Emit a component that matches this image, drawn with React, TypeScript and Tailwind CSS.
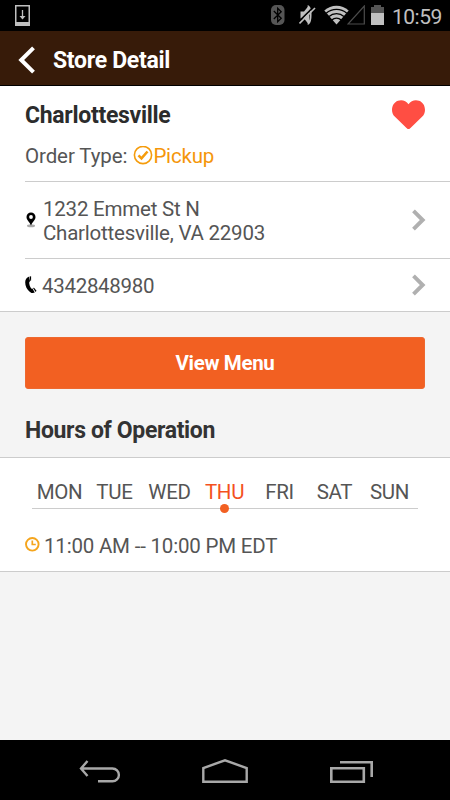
import type { ReactNode } from 'react';

const days = [
  { label: 'MON' },
  { label: 'TUE' },
  { label: 'WED' },
  { label: 'THU', active: true },
  { label: 'FRI' },
  { label: 'SAT' },
  { label: 'SUN' },
];

function StatusBar() {
  return (
    <div className="flex h-[31px] shrink-0 items-start bg-black text-[#c0c0c0]">
      <svg className="mt-[5px] ml-[15px]" width="15" height="21" viewBox="0 0 15 21">
        <path d="M0 0h15v21H0z" fill="#c0c0c0" />
        <path d="M1.500 1.500h12v15.500h-12z" fill="#000" />
        <path d="M7.500 5v8" stroke="#c0c0c0" strokeWidth="1.300" />
        <path d="M4.500 11h6L7.500 14.500z" fill="#c0c0c0" />
      </svg>

      <svg className="mt-[5px] ml-[241px]" width="14" height="20" viewBox="0 0 14 20">
        <rect x="0" y="0" width="13.500" height="20" rx="5" fill="#555" />
        <path d="M2.800 6l7.400 7.200L6.700 16.700V3.300l3.500 3.500L2.800 14" fill="none" stroke="#000" strokeWidth="1.300" />
      </svg>

      <svg className="mt-[5px] ml-[14px]" width="18" height="20" viewBox="0 0 18 20">
        <path d="M1.500 6.500H5L9.500 1v18L5 13.500H1.500z" fill="#c0c0c0" />
        <path d="M9.500 1.500c3 2 3 15 0 17z" fill="none" stroke="#c0c0c0" strokeWidth="1.600" />
        <path d="M-.5 17L15 1.500" stroke="#000" strokeWidth="1.600" />
        <path d="M.5 18.500L16 3" stroke="#c0c0c0" strokeWidth="1.600" />
      </svg>

      <svg className="mt-[5px] ml-[7px]" width="25" height="20" viewBox="0 0 25 20">
        <path d="M12.500 19.500L.3 5.500C7-.8 18-.8 24.700 5.500z" fill="#c0c0c0" />
        <path d="M2.200 8.200c5.800-5.200 14.800-5.200 20.600 0M5 11.500c4.200-3.800 10.800-3.800 15 0M7.800 15c2.700-2.500 6.700-2.500 9.400 0" fill="none" stroke="#000" strokeWidth="1.300" />
      </svg>

      <svg className="mt-[5px] -ml-[2px]" width="18" height="20" viewBox="0 0 18 20">
        <path d="M17.300 1v18H1z" fill="none" stroke="#4c4c4c" strokeWidth="1.200" />
      </svg>

      <svg className="mt-[5px] ml-[6px]" width="13" height="20" viewBox="0 0 13 20">
        <path d="M0 2h3V0h7v2h3v6H0z" fill="#555" />
        <path d="M0 8h13v12H0z" fill="#c0c0c0" />
      </svg>

      <span className="ml-[8px] pt-[5px] text-[21px] leading-[24px] tracking-[-0.5px] whitespace-nowrap">10:59</span>
    </div>
  );
}

function Header() {
  return (
    <header className="flex h-[55px] shrink-0 items-center border-b border-black bg-[#371b09] text-white">
      <svg className="mt-[4px] ml-[18px]" width="18" height="28" viewBox="0 0 18 28">
        <path d="M15.500 1.800L3.200 14l12.300 12.200" fill="none" stroke="currentColor" strokeWidth="4" />
      </svg>
      <h1 className="mt-[5px] ml-[17px] text-[23px] leading-[28px] font-bold tracking-[-0.3px]">Store Detail</h1>
    </header>
  );
}

function Chevron() {
  return (
    <svg className="ml-auto shrink-0" width="14" height="22" viewBox="0 0 14 22">
      <path d="M1.500 1.800l9.200 9.200-9.200 9.200" fill="none" stroke="#b0b0b0" strokeWidth="3.900" />
    </svg>
  );
}

function Row({ className, children }: { className: string; children: ReactNode }) {
  return (
    <div className={`ml-[25px] flex items-center border-t border-[#ccc] pr-[24px] ${className}`}>
      {children}
    </div>
  );
}

function StoreCard() {
  return (
    <section className="h-[226px] border-b border-[#ccc] bg-white">
      <div className="flex h-[95px] justify-between pr-[25px] pl-[25px]">
        <div>
          <h2 className="mt-[16px] text-[23px] leading-[28px] font-bold tracking-[-0.3px] text-[#2c2c2c]">
            Charlottesville
          </h2>
          <div className="mt-[13px] flex items-center text-[20.500px] leading-[26px] tracking-[-0.1px]">
            <span>Order Type:</span>
            <svg className="ml-[6px]" width="20" height="20" viewBox="0 0 20 20">
              <circle cx="10" cy="9" r="8.600" fill="none" stroke="#f59c0c" strokeWidth="1.600" />
              <path d="M5.500 9.300l3 3L14.500 5.500" fill="none" stroke="#f59c0c" strokeWidth="2.600" />
            </svg>
            <span className="tracking-[-0.2px] text-[#f5960a]">Pickup</span>
          </div>
        </div>
        <svg className="mt-[14px]" width="34" height="30" viewBox="0 0 34 30">
          <path d="M17.500 29c-1 0-1.500-.5-2-1L3.700 16.500C-1 12 .7 3 7 .8c4-1.400 8 0 10.500 3.400C20 .8 24-.6 28 .8c6.300 2.200 8 11.200 3.300 15.700L19.500 28c-.5.500-1 1-2 1z" fill="#ff4e43" />
        </svg>
      </div>

      <Row className="h-[77px]">
        <svg className="shrink-0" width="12" height="16" viewBox="0 0 12 16">
          <ellipse cx="6" cy="13.800" rx="4" ry="1.500" fill="#aaa" />
          <path d="M6 13.500C5 10.500 1.500 8.300 1.500 5a4.500 4.500 0 019 0c0 3.300-3.500 5.500-4.500 8.500z" fill="#000" />
          <circle cx="6" cy="5" r="1.900" fill="#fff" />
        </svg>
        <p className="mt-[2px] ml-[6px] text-[20.500px] leading-[24px] tracking-[-0.22px] whitespace-nowrap">
          1232 Emmet St N
          <br />
          Charlottesville, VA 22903
        </p>
        <Chevron />
      </Row>

      <Row className="h-[52px]">
        <svg className="shrink-0" width="12" height="18" viewBox="0 0 12 18">
          <path d="M3.400.9L4.100.6l1 4.800-.8.400C3.900 8 5 11 6.500 12.700l.9-.3 2.400 4.200c-1.600.8-3.200.6-4.800-.7C2 13.700.1 10 .2 6.200.2 3.600 1.400 1.800 3.400.9z" fill="#000" />
          <path d="M4.700.4L6.100.2v4.300l-.8.500zM8 12l1-.3 2.500 3-.9 1.300z" fill="#000" />
        </svg>
        <span className="mt-[2px] ml-[5px] text-[20.500px] leading-[26px] tracking-[-0.3px]">4342848980</span>
        <Chevron />
      </Row>
    </section>
  );
}

function Hours() {
  return (
    <section className="h-[115px] border-y border-[#ccc] bg-white">
      <div className="mx-[32px] flex h-[51px] border-b border-[#ccc] pt-[21px] text-[20.500px] leading-[26px] tracking-[-0.3px]">
        {days.map((day) => (
          <div
            key={day.label}
            className={`relative w-[55px] shrink-0 text-center ${day.active ? 'text-[#f4511e]' : ''}`}
          >
            {day.label}
            {day.active && (
              <span className="absolute top-[25px] left-[23px] size-[9px] rounded-full bg-[#f26022]" />
            )}
          </div>
        ))}
      </div>
      <div className="mt-[24px] ml-[25px] flex items-center">
        <svg className="-mt-[3px]" width="15" height="15" viewBox="0 0 15 15">
          <circle cx="7.300" cy="7.300" r="6.300" fill="none" stroke="#f5a51d" strokeWidth="1.900" />
          <path d="M7.300 3.500v4h3.500" fill="none" stroke="#f5a51d" strokeWidth="1.700" />
        </svg>
        <span className="ml-[4px] text-[20.500px] leading-[26px] tracking-[-0.2px] whitespace-nowrap">
          11:00 AM -- 10:00 PM EDT
        </span>
      </div>
    </section>
  );
}

function NavBar() {
  return (
    <nav className="flex h-[60px] shrink-0 items-start bg-black">
      <svg className="mt-[20px] ml-[79px]" width="43" height="24" viewBox="0 0 43 24">
        <path d="M8.500 1L2 8.500 8.500 16M2 8.500h31.500a6.400 6.400 0 010 12.800H19" fill="none" stroke="#a8a8a8" strokeWidth="2.400" />
      </svg>
      <svg className="mt-[18px] ml-[80px]" width="46" height="26" viewBox="0 0 46 26">
        <path d="M1.300 23.700V10L23 2.300 44.700 10v13.700z" fill="none" stroke="#a8a8a8" strokeWidth="2.400" />
      </svg>
      <svg className="mt-[20px] ml-[82px]" width="44" height="24" viewBox="0 0 44 24">
        <path d="M1.300 8.200h32.500v13.500H1.300zM10 2.200h31.700V17" fill="none" stroke="#a8a8a8" strokeWidth="2.600" />
      </svg>
    </nav>
  );
}

export default function App() {
  return (
    <div className="flex h-[800px] w-[450px] flex-col overflow-hidden bg-[#f4f4f4] font-['Roboto',sans-serif] text-[#555]">
      <StatusBar />
      <Header />
      <main className="flex-1">
        <StoreCard />
        <div className="px-[25px] pt-[25px]">
          <button className="h-[52px] w-full rounded-[3px] border border-[#ee682f] bg-[#f26022] pt-[1px] text-[20.500px] font-bold tracking-[-0.35px] text-white">
            View Menu
          </button>
          <h2 className="mt-[28px] mb-[12px] text-[23px] leading-[28px] font-bold tracking-[-0.35px] text-[#333]">
            Hours of Operation
          </h2>
        </div>
        <Hours />
      </main>
      <NavBar />
    </div>
  );
}
